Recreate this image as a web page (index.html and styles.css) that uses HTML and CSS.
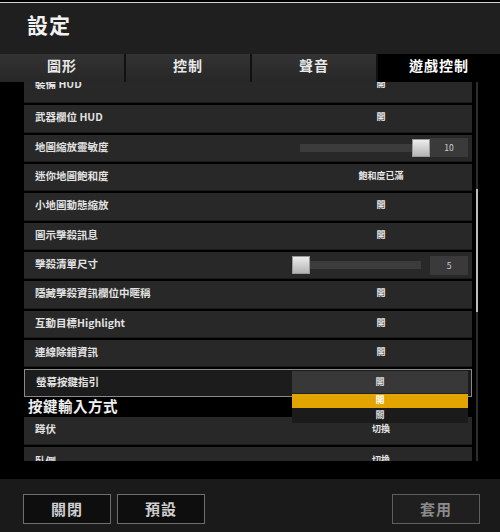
FILE: index.html
```html
<!DOCTYPE html>
<html lang="zh-Hant">
  <head>
    <meta charset="UTF-8" />
    <meta name="viewport" content="width=device-width, initial-scale=1.0" />
    <title>設定</title>
    <link rel="stylesheet" href="styles.css">
  </head>

  <body>
    <div class="header">
      <div class="topline"></div>
      <h1>設定</h1>
    </div>

    <div class="tabs">
      <div class="tab">圖形</div>
      <div class="tab">控制</div>
      <div class="tab">聲音</div>
      <div class="tab active">遊戲控制</div>
    </div>

    <div class="main">
      <div class="list-wrap">
        <div class="list">
          <div class="row first"><span class="label">裝備 HUD</span><span class="value">開</span></div>
          <div class="row"><span class="label">武器欄位 HUD</span><span class="value">開</span></div>
          <div class="row">
            <span class="label">地圖縮放靈敏度</span>
            <div class="value slider-cell">
              <div class="slider">
                <div class="track"></div>
                <div class="thumb" style="left: 120px"></div>
              </div>
              <div class="num">10</div>
            </div>
          </div>
          <div class="row"><span class="label">迷你地圖飽和度</span><span class="value">飽和度已滿</span></div>
          <div class="row"><span class="label">小地圖動態縮放</span><span class="value">開</span></div>
          <div class="row"><span class="label">圖示擊殺訊息</span><span class="value">開</span></div>
          <div class="row">
            <span class="label">擊殺清單尺寸</span>
            <div class="value slider-cell">
              <div class="slider">
                <div class="track"></div>
                <div class="thumb" style="left: 0px"></div>
              </div>
              <div class="num">5</div>
            </div>
          </div>
          <div class="row"><span class="label">隱藏擊殺資訊欄位中暱稱</span><span class="value">開</span></div>
          <div class="row"><span class="label">互動目標Highlight</span><span class="value">開</span></div>
          <div class="row"><span class="label">連線除錯資訊</span><span class="value">開</span></div>
          <div class="row selected">
            <span class="label">螢幕按鍵指引</span>
            <div class="dropdown">
              <div class="opt current">開</div>
              <div class="opt hover">開</div>
              <div class="opt">關</div>
            </div>
          </div>

          <h2 class="section">按鍵輸入方式</h2>
          <div class="row"><span class="label">蹲伏</span><span class="value">切換</span></div>
          <div class="row last"><span class="label">臥倒</span><span class="value">切換</span></div>
        </div>
      </div>
      <div class="scrollbar"><div class="scroll-thumb"></div></div>
    </div>

    <div class="footer">
      <button class="btn">關閉</button>
      <button class="btn">預設</button>
      <button class="btn apply">套用</button>
    </div>
  </body>
</html>
```

FILE: styles.css
```css
* {
  margin: 0;
  padding: 0;
  box-sizing: border-box;
  font-family: "Noto Sans CJK TC", "Noto Sans", sans-serif;
}

body {
  width: 500px;
  height: 532px;
  background-color: #000;
  color: #e6e6e6;
  overflow: hidden;
}

/* header */
.header {
  height: 52px;
  background-color: #1f1f1f;
}

.topline {
  height: 1px;
  margin-top: 2px;
  background-color: #d0d0d0;
}

.header h1 {
  padding: 6px 0 0 27px;
  font-size: 21px;
  line-height: 30px;
  font-weight: 700;
  color: #f2f2f2;
  letter-spacing: 1px;
}

/* tabs */
.tabs {
  display: grid;
  grid-template-columns: 126px 126px 126px 122px;
  height: 28px;
}

.tab {
  background: linear-gradient(#333, #272727);
  border-right: 2px solid #111;
  text-align: center;
  font-size: 14px;
  font-weight: 700;
  line-height: 22px;
  color: #e8e8e8;
  letter-spacing: 1px;
}

.tab.active {
  background: #000;
  border-right: none;
  color: #fff;
}

/* list */
.main {
  display: flex;
  height: 397px;
  background-color: #000;
}

.list-wrap {
  width: 472px;
  height: 379px;
  padding-left: 24px;
  overflow: hidden;
}

.list {
  margin-top: -6px;
}

.row {
  position: relative;
  display: flex;
  align-items: center;
  height: 27.33px;
  margin-bottom: 2px;
  padding-bottom: 3px;
  background-color: #282828;
  border-bottom: 1px solid #1b1b1b;
}

.row.first {
  padding-bottom: 11px;
}

.label {
  flex: 1;
  padding-left: 11px;
  font-size: 10.5px;
  font-weight: 700;
  color: #e2e2e2;
}

.value {
  width: 178px;
  margin-right: 2px;
  text-align: center;
  font-size: 9px;
  font-weight: 700;
  color: #e8e8e8;
}

.slider-cell {
  display: flex;
  align-items: center;
  margin-bottom: -3px;
}

.slider {
  position: relative;
  width: 138px;
  height: 18px;
}

.track {
  margin: 5px 0 0 8px;
  width: 121px;
  height: 8px;
  background-color: #3c3c3c;
}

.thumb {
  position: absolute;
  top: 0;
  width: 18px;
  height: 18px;
  background: linear-gradient(#ececec, #b4b4b4);
  border: 1px solid #9a9a9a;
}

.num {
  width: 38px;
  height: 19px;
  background-color: #3a3a3a;
  font-size: 8.5px;
  font-weight: 400;
  line-height: 18px;
  color: #d0d0d0;
}

.row.selected {
  background-color: #1c1c1c;
  border: 1px solid #8a8a8a;
}

.dropdown {
  position: absolute;
  top: 1px;
  left: 267px;
  width: 176px;
  z-index: 2;
  font-size: 9px;
  font-weight: 700;
  text-align: center;
}

.opt {
  height: 15px;
  line-height: 13px;
  background-color: #1b1b1b;
  color: #e0e0e0;
}

.opt.current {
  height: 23px;
  line-height: 21px;
  background-color: #383838;
  border-bottom: 1px solid #222;
}

.opt.hover {
  height: 14px;
  line-height: 12px;
  background-color: #e2a400;
  color: #fff;
}

.section {
  height: 20.67px;
  margin-top: -2px;
  padding-left: 4px;
  font-size: 14.5px;
  font-weight: 700;
  line-height: 17px;
  color: #f0f0f0;
  letter-spacing: 0.5px;
}

.row.last {
  padding-bottom: 0;
  align-items: flex-start;
}

.row.last span {
  padding-top: 6px;
}

.scrollbar {
  position: relative;
  width: 2px;
  height: 379px;
  margin-left: 4px;
  background-color: #2e2e2e;
}

.scroll-thumb {
  position: absolute;
  top: 107px;
  left: 0;
  width: 2px;
  height: 123px;
  background-color: #bdbdbd;
}

/* footer */
.footer {
  display: flex;
  height: 55px;
  padding: 15px 0 0 23px;
  background-color: #1a1a1a;
}

.btn {
  width: 88px;
  height: 30px;
  margin-right: 6px;
  padding-bottom: 2px;
  background-color: #0e0e0e;
  border: 1px solid #6e6e6e;
  color: #cfcfcf;
  font-size: 15px;
  font-weight: 700;
  letter-spacing: 1px;
  cursor: pointer;
}

.btn.apply {
  margin-left: 181px;
  background-color: #1f1f1f;
  border-color: #5e5e5e;
  color: #8a8a8a;
}
```
